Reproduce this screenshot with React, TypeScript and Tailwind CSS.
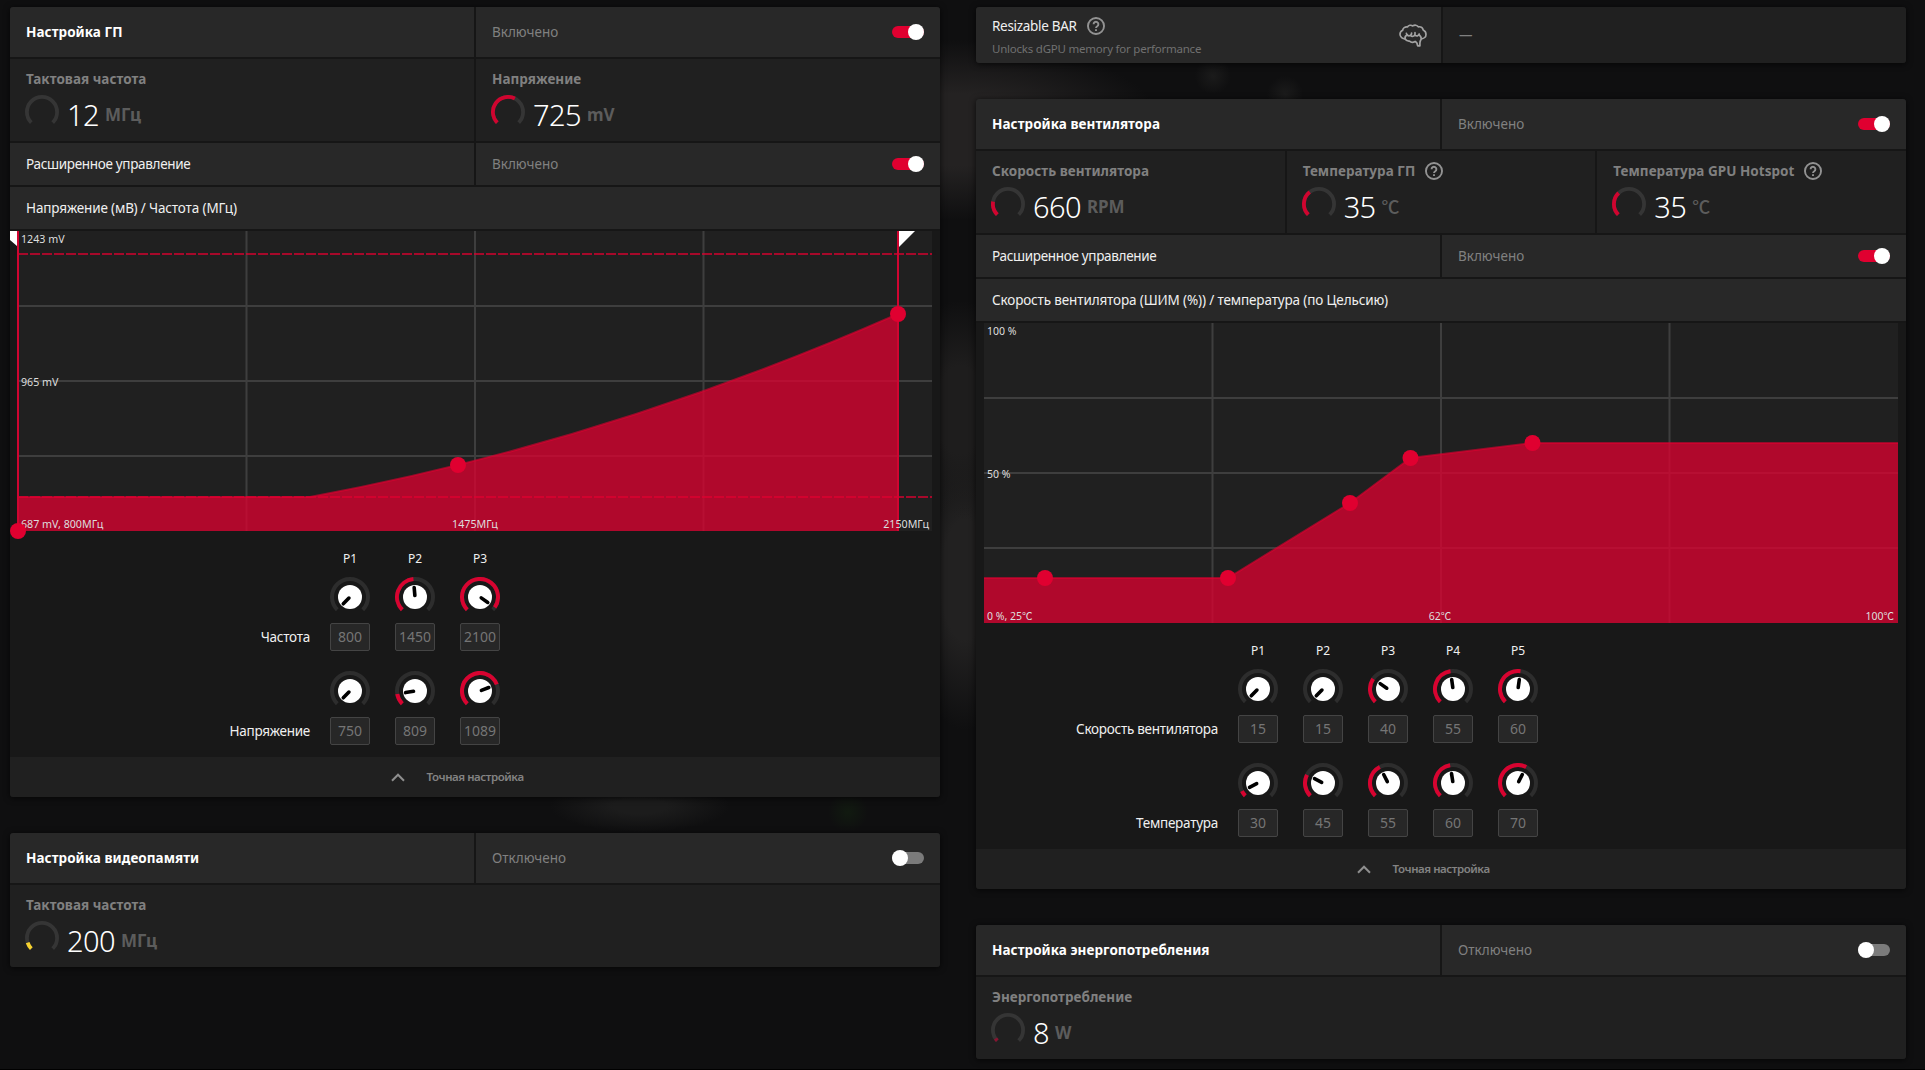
import React from "react"
import clsx from "clsx"

const RED = "#e00030"

// arc from the lower left corner clockwise, 270 degrees in total
const arcPath = (c: number, r: number, value: number) => {
  const start = (-135 * Math.PI) / 180
  const end = ((-135 + 270 * value) * Math.PI) / 180
  const x1 = c + r * Math.sin(start)
  const y1 = c - r * Math.cos(start)
  const x2 = c + r * Math.sin(end)
  const y2 = c - r * Math.cos(end)
  return `M${x1} ${y1}A${r} ${r} 0 ${value * 270 > 180 ? 1 : 0} 1 ${x2} ${y2}`
}

const Gauge = ({ value, color = "#d0042f" }: { value: number; color?: string }) => (
  <svg width="34" height="34" viewBox="0 0 34 34" fill="none" strokeWidth="3.8">
    <path d={arcPath(17, 15.1, 1)} stroke="#353535" />
    {value > 0 && <path d={arcPath(17, 15.1, value)} stroke={color} />}
  </svg>
)

const Knob = ({ value }: { value: number }) => (
  <svg width="40" height="40" viewBox="0 0 40 40" fill="none">
    <path d={arcPath(20, 18, 1)} stroke="#2d2d2d" strokeWidth="4" />
    {value > 0 && <path d={arcPath(20, 18, value)} stroke="#d80330" strokeWidth="4" />}
    <circle cx="20" cy="20" r="12" fill="#fff" />
    <path
      d="M20 18.5V10.5"
      stroke="#000"
      strokeWidth="3.6"
      strokeLinecap="round"
      transform={`rotate(${-135 + 270 * value} 20 20)`}
    />
  </svg>
)

const Toggle = ({ on }: { on: boolean }) => (
  <div
    className={clsx(
      "w-8 h-3 rounded-full flex items-center",
      on ? "bg-[#e00030] justify-end" : "bg-[#7b7b7b] justify-start"
    )}
  >
    <div className="w-4 h-4 rounded-full bg-white shrink-0" />
  </div>
)

const HelpIcon = () => (
  <svg width="18" height="18" viewBox="0 0 18 18" fill="none" stroke="#929292" strokeWidth="1.9">
    <circle cx="9" cy="9" r="8.05" />
    <path d="M6.600 7.300a2.400 2.400 0 1 1 3.700 1.900c-.9.6-1.300 1-1.300 1.900" />
    <path d="M9 12.200v1.800" />
  </svg>
)

const BrainIcon = () => (
  <svg
    width="28"
    height="23"
    viewBox="0 0 28 23"
    fill="none"
    stroke="#a3a3a3"
    strokeWidth="1.7"
    strokeLinecap="round"
    strokeLinejoin="round"
  >
    <path d="M6 14.8C3.6 14.8 1 13 1 10.3 1 8.3 2.1 6.9 3.7 6.2 3.9 4 6 2.6 8.4 2.9 9.6 1.3 12 .8 13.8 1.9c1.9-1.2 4.3-.8 5.5.9 2.400-.3 4.500 1.100 4.900 3.300 1.700.8 2.800 2.300 2.800 4.300 0 2.500-2 4.300-4.600 4.400-1 1.600-1.600 2.600-1.500 4.300v2.700h-2.300c-.2-2.400-.9-3.700-2.400-4.400-1.900 1.100-4.300 1-5.700-.3-1.900.2-3.500-.6-4.500-2.300z" />
    <path d="M6 14.800c-.2-1.900.8-3.400 2.600-3.900M7.400 9.300c.4 2.200 2.100 3.200 3.700 2.300 1.500-.8 1.600-1.800 1.500-2.600M11.500 11.600c1.700 1.300 4 .9 4.500-1.300V8.700M16.200 11.300c1.300 1.100 3.300.7 4-1.300M20.500 11.200c.9.900 1.600 2 1.900 3.400" />
  </svg>
)

const Panel = ({ children }: { children: React.ReactNode }) => (
  <div className="w-[930px] flex flex-col gap-0.5 bg-[#161616] rounded-[3px] overflow-hidden shadow-[0_1px_6px_rgba(0,0,0,0.7)]">
    {children}
  </div>
)

type SwitchRowProps = { title: string; on: boolean; main?: boolean }

const SwitchRow = ({ title, on, main }: SwitchRowProps) => (
  <div className={clsx("grid grid-cols-2 gap-0.5", main ? "h-[50px]" : "h-[42px]")}>
    <div className="bg-[#282828] flex items-center px-4">
      {main ? (
        <h2 className="font-bold text-white text-[13.5px] leading-5 tracking-[0.05px]">{title}</h2>
      ) : (
        <p className="text-[#f0f0f0] text-[13.5px] leading-5 tracking-[-0.32px]">{title}</p>
      )}
    </div>
    <div className="bg-[#282828] flex items-center justify-between px-4">
      <p className="text-[#808080] text-[13.5px] leading-5">{on ? "Включено" : "Отключено"}</p>
      <Toggle on={on} />
    </div>
  </div>
)

type MetricProps = {
  label: string
  value: number
  unit: string
  gauge: number
  color?: string
  help?: boolean
}

const Metric = ({ label, value, unit, gauge, color, help }: MetricProps) => (
  <div className="bg-[#202020] h-[82px] pt-[11px] pl-4 flex flex-col">
    <div className="flex items-center h-[18px] gap-2.5">
      <p className="font-bold text-[#808080] text-[13.5px] leading-[18px] tracking-[0.03px]">{label}</p>
      {help && <HelpIcon />}
    </div>
    <div className="flex mt-[7px] -ml-px">
      <Gauge value={gauge} color={color} />
      <p className="ml-2 text-[29px] leading-[39px] tracking-[-0.6px] text-white font-light">{value}</p>
      <p
        className={clsx(
          "ml-[6px] leading-[39px] text-[#5c5c5c]",
          unit === "℃" ? "text-[18px] font-medium font-['Noto_Sans_CJK_SC',sans-serif]" : "text-[17px] font-bold"
        )}
      >
        {unit}
      </p>
    </div>
  </div>
)

const ChartTitle = ({ children }: { children: string }) => (
  <div className="bg-[#282828] h-[42px] flex items-center px-4">
    <p className="text-[#f0f0f0] text-[13.5px] leading-5 tracking-[-0.14px]">{children}</p>
  </div>
)

const Grid = () => (
  <>
    <rect x="8" y="0" width="914" height="300" fill="#202020" />
    <path
      d="M236.500 0V300M465 0V300M693.500 0V300M8 75H922M8 150H922M8 225H922"
      stroke="#3e3e3e"
      strokeWidth="2"
    />
  </>
)

const Celsius = () => <tspan className="font-['Noto_Sans_CJK_SC',sans-serif]">℃</tspan>

const VoltageChart = () => (
  <svg width="930" height="300" viewBox="0 0 930 300" className="block relative overflow-visible bg-[#181818]">
    <Grid />
    <path d="M8 23H922M8 266H922" stroke={RED} strokeWidth="2" strokeDasharray="10 2" opacity="0.7" />
    <path d="M8 266H300Q594 212 888 83V300H8Z" fill={RED} fillOpacity="0.75" />
    <path d="M8 266H300Q594 212 888 83" fill="none" stroke={RED} strokeWidth="2" opacity="0.6" />
    <path d="M8 0V300M888 0V300" stroke="#d00531" strokeWidth="2" />
    <path d="M0 0H7V15L0 9ZM889 0H905L889 16Z" fill="#fff" />
    <g fill="#dedede" className="text-[10.700px]">
      <text x="11" y="12">1243 mV</text>
      <text x="11" y="155">965 mV</text>
      <text x="11" y="297">687 mV, 800МГц</text>
      <text x="465" y="297" textAnchor="middle">1475МГц</text>
      <text x="919" y="297" textAnchor="end">2150МГц</text>
    </g>
    <g fill={RED}>
      <circle cx="8" cy="300" r="8" />
      <circle cx="448" cy="234" r="8" />
      <circle cx="888" cy="83" r="8" />
    </g>
  </svg>
)

const FanChart = () => {
  const points = [
    [69, 255],
    [252, 255],
    [374, 180],
    [434.5, 135],
    [556.5, 120],
  ]
  const line = `M8 255L${points.map((p) => p.join(" ")).join("L")}L922 120`
  return (
    <svg width="930" height="300" viewBox="0 0 930 300" className="block bg-[#181818]">
      <Grid />
      <path d={`${line}V300H8Z`} fill={RED} fillOpacity="0.75" />
      <path d={line} fill="none" stroke={RED} strokeWidth="2" opacity="0.6" />
      <g fill={RED}>
        {points.map(([x, y]) => (
          <circle key={x} cx={x} cy={y} r="8" />
        ))}
      </g>
      <g fill="#dedede" className="text-[10.500px]">
        <text x="11" y="12">100 %</text>
        <text x="11" y="155">50 %</text>
        <text x="11" y="297">0 %, 25<Celsius /></text>
        <text x="464" y="297" textAnchor="middle">62<Celsius /></text>
        <text x="918" y="297" textAnchor="end">100<Celsius /></text>
      </g>
    </svg>
  )
}

type ControlRow = { label: string; min: number; max: number; values: number[] }

const Controls = ({ rows, labelClass }: { rows: ControlRow[]; labelClass: string }) => (
  <div className="h-[226px] pt-5 -mt-0.5 bg-[#181818]">
    <div className="flex h-4 mb-2.5">
      <div className={clsx("mr-5 shrink-0", labelClass)} />
      <div className="flex gap-[25px]">
        {rows[0].values.map((_, i) => (
          <p key={i} className="w-10 text-center text-xs leading-4 text-[#f0f0f0]">
            P{i + 1}
          </p>
        ))}
      </div>
    </div>
    {rows.map((row) => (
      <div key={row.label} className="flex items-end h-[74px] mb-5">
        <p
          className={clsx(
            "mr-5 shrink-0 text-right text-[13.5px] leading-7 tracking-[-0.26px] text-[#f0f0f0]",
            labelClass
          )}
        >
          {row.label}
        </p>
        <div className="flex gap-[25px]">
          {row.values.map((value, i) => (
            <div key={i} className="flex flex-col gap-1.5">
              <Knob value={(value - row.min) / (row.max - row.min)} />
              <div className="w-10 h-7 border border-[#444444] rounded-[2px] bg-[#272727] flex items-center justify-center text-sm text-[#757575]">
                {value}
              </div>
            </div>
          ))}
        </div>
      </div>
    ))}
  </div>
)

const FineTuning = () => (
  <div className="h-10 -mt-0.5 bg-[#202020] flex items-center justify-center pr-[35px] gap-[21px]">
    <svg width="14" height="9" viewBox="0 0 14 9" fill="none" stroke="#8e8e8e" strokeWidth="2">
      <path d="M1 7.800L7 1.700L13 7.800" />
    </svg>
    <p className="text-[11.5px] font-semibold tracking-[-0.45px] text-[#838383]">Точная настройка</p>
  </div>
)

const App = () => {
  return (
    <div className="w-[1925px] h-[1070px] overflow-hidden bg-[#0f0f10] bg-[radial-gradient(ellipse_210px_90px_at_955px_130px,#242222_40%,transparent_100%),radial-gradient(ellipse_60px_110px_at_960px_410px,#1e1d1d_40%,transparent_100%),radial-gradient(ellipse_60px_150px_at_965px_580px,#222121_40%,transparent_100%),radial-gradient(circle_18px_at_1213px_76px,#1b1b1b,transparent),radial-gradient(circle_18px_at_1285px_94px,#1b1b1b,transparent),radial-gradient(ellipse_90px_26px_at_640px_806px,#1c1c1c_30%,transparent_100%),radial-gradient(circle_20px_at_848px_812px,#111a10,transparent)] border-b border-black pt-[7px] pl-[10px] flex items-start gap-9 font-['Noto_Sans','Noto_Sans_CJK_SC',sans-serif]">
      {/* left column */}
      <div className="flex flex-col gap-9">
        <Panel>
          <SwitchRow title="Настройка ГП" on main />
          <div className="grid grid-cols-2 gap-0.5">
            <Metric label="Тактовая частота" value={12} unit="МГц" gauge={0} />
            <Metric label="Напряжение" value={725} unit="mV" gauge={0.6} />
          </div>
          <SwitchRow title="Расширенное управление" on />
          <ChartTitle>Напряжение (мВ) / Частота (МГц)</ChartTitle>
          <VoltageChart />
          <Controls
            labelClass="w-[300px]"
            rows={[
              { label: "Частота", min: 800, max: 2150, values: [800, 1450, 2100] },
              { label: "Напряжение", min: 750, max: 1200, values: [750, 809, 1089] },
            ]}
          />
          <FineTuning />
        </Panel>

        <Panel>
          <SwitchRow title="Настройка видеопамяти" on={false} main />
          <Metric label="Тактовая частота" value={200} unit="МГц" gauge={0.1} color="#f6d12f" />
        </Panel>
      </div>

      {/* right column */}
      <div className="flex flex-col gap-9">
        <Panel>
          <div className="grid grid-cols-[465px_463px] gap-0.5 h-14">
            <div className="bg-[#282828] flex items-center justify-between pl-4 pr-3.5">
              <div className="pt-1">
                <div className="flex items-center gap-2.5 h-[18px] mb-1.5">
                  <p className="text-[13.5px] leading-[18px] tracking-[-0.3px] text-[#f0f0f0]">Resizable BAR</p>
                  <HelpIcon />
                </div>
                <p className="text-[11.5px] leading-4 tracking-[-0.22px] text-[#707070]">
                  Unlocks dGPU memory for performance
                </p>
              </div>
              <BrainIcon />
            </div>
            <div className="bg-[#202020] flex items-center px-4">
              <p className="text-[13.5px] text-[#808080]">—</p>
            </div>
          </div>
        </Panel>

        <Panel>
          <SwitchRow title="Настройка вентилятора" on main />
          <div className="grid grid-cols-3 gap-0.5">
            <Metric label="Скорость вентилятора" value={660} unit="RPM" gauge={0.2} />
            <Metric label="Температура ГП" value={35} unit="℃" gauge={0.36} help />
            <Metric label="Температура GPU Hotspot" value={35} unit="℃" gauge={0.34} help />
          </div>
          <SwitchRow title="Расширенное управление" on />
          <ChartTitle>Скорость вентилятора (ШИМ (%)) / температура (по Цельсию)</ChartTitle>
          <FanChart />
          <Controls
            labelClass="w-[242px]"
            rows={[
              { label: "Скорость вентилятора", min: 15, max: 100, values: [15, 15, 40, 55, 60] },
              { label: "Температура", min: 25, max: 100, values: [30, 45, 55, 60, 70] },
            ]}
          />
          <FineTuning />
        </Panel>

        <Panel>
          <SwitchRow title="Настройка энергопотребления" on={false} main />
          <Metric label="Энергопотребление" value={8} unit="W" gauge={0.04} color="#8a1230" />
        </Panel>
      </div>
    </div>
  )
}

export default App
